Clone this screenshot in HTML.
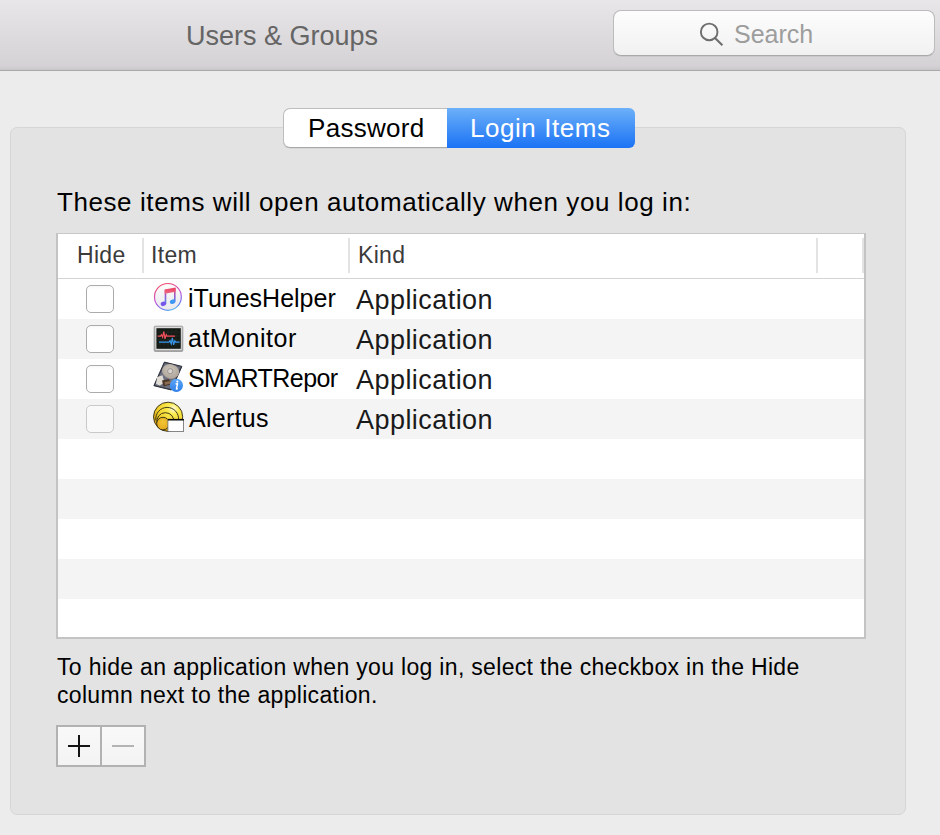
<!DOCTYPE html>
<html><head><meta charset="utf-8">
<style>
html,body{margin:0;padding:0;}
body{width:940px;height:835px;overflow:hidden;background:#ececec;position:relative;font-family:"Liberation Sans",sans-serif;}
.a{position:absolute;}
.t{position:absolute;white-space:pre;line-height:1;}
#titlebar{left:0;top:0;width:940px;height:70px;background:linear-gradient(#e8e6e8 0,#d4d2d5 66px,#c9c7ca 70px);border-bottom:1px solid #a9a9a9;}
#search{left:613px;top:10px;width:320px;height:44px;box-shadow:0 0.5px 0.6px rgba(0,0,0,0.12);border:1px solid #bcbcbc;border-bottom-color:#a9a9a9;border-radius:8px;background:linear-gradient(#fdfdfd,#f1f1f1);}
#group{left:10px;top:127px;width:894px;height:686px;border:1px solid #d6d6d6;border-radius:7px;background:#e3e3e3;}
#tabpw{left:283px;top:108px;width:163px;height:38px;background:#fff;border:1px solid #bdbdbd;border-right:none;border-bottom-color:#a8a8a8;border-radius:7px 0 0 7px;box-shadow:0 0.6px 0.6px rgba(0,0,0,0.1);}
#tabli{left:447px;top:108px;width:188px;height:40px;background:linear-gradient(#6cb0f9,#1b73f5);border-radius:0 6px 6px 0;}
#table{left:56px;top:233px;width:806px;height:403px;border:2px solid #c3c3c3;border-top:1px solid #c8c8c8;background:#fff;}
.row{position:absolute;left:0;width:806px;height:40px;}
.alt{background:#f4f4f4;}
.sep{position:absolute;top:4px;width:2px;height:35px;background:#e3e3e3;}
.cb{position:absolute;left:28px;top:6px;width:26px;height:26px;border:1px solid #ababab;border-radius:5px;background:linear-gradient(#f8f8f8,#fff 4px);}
#btns{left:56px;top:725px;width:86px;height:38px;border:2px solid #b2b2b2;background:linear-gradient(#f9f9f9,#f3f3f3);}
</style></head><body>
<div id="titlebar" class="a"></div>
<div class="t" style="left:186px;top:23px;font-size:27px;color:#656565;letter-spacing:0;">Users &amp; Groups</div>
<div id="search" class="a"></div>
<svg class="a" style="left:698px;top:21px" width="28" height="28" viewBox="0 0 28 28"><circle cx="11.2" cy="10.9" r="8.3" fill="none" stroke="#6e6e6e" stroke-width="1.9"/><line x1="17" y1="16.9" x2="24.4" y2="24.3" stroke="#6e6e6e" stroke-width="2.1"/></svg>
<div class="t" style="left:734px;top:22px;font-size:25px;color:#9d9d9d;">Search</div>

<div id="group" class="a"></div>
<div id="tabpw" class="a"></div>
<div id="tabli" class="a"></div>
<div class="t" style="left:308px;top:115px;font-size:26px;color:#000;letter-spacing:0.3px;">Password</div>
<div class="t" style="left:470px;top:115px;font-size:26px;color:#fff;letter-spacing:0.55px;">Login Items</div>

<div class="t" style="left:57px;top:189px;font-size:26px;color:#000;letter-spacing:0.58px;">These items will open automatically when you log in:</div>

<div id="table" class="a">
  <div class="sep" style="left:84px"></div>
  <div class="sep" style="left:290px"></div>
  <div class="sep" style="left:758px"></div>
  <div class="sep" style="left:804px"></div>
  <div class="a" style="left:0;top:44px;width:806px;height:1px;background:#d4d4d4"></div>
  <div class="row" style="top:45px"></div>
  <div class="row alt" style="top:85px"></div>
  <div class="row" style="top:125px"></div>
  <div class="row alt" style="top:165px"></div>
  <div class="row" style="top:205px"></div>
  <div class="row alt" style="top:245px"></div>
  <div class="row" style="top:285px"></div>
  <div class="row alt" style="top:325px"></div>
  <div class="row" style="top:365px;height:38px"></div>
</div>
<div class="t" style="left:77px;top:244px;font-size:23px;color:#3b3b3b;letter-spacing:0.3px;">Hide</div>
<div class="t" style="left:151px;top:244px;font-size:23px;color:#3b3b3b;letter-spacing:0.3px;">Item</div>
<div class="t" style="left:358px;top:244px;font-size:23px;color:#3b3b3b;letter-spacing:0.3px;">Kind</div>

<!-- rows -->
<div class="a" style="left:58px;top:279px;width:806px;height:160px;">
  <div class="cb" style="top:6px"></div>
  <div class="cb" style="top:46px"></div>
  <div class="cb" style="top:86px"></div>
  <div class="cb" style="top:126px;border-color:#c9c9c9;background:#f9f9f9"></div>
</div>
<div class="t" style="left:188px;top:286px;font-size:25px;color:#000;">iTunesHelper</div>
<div class="t" style="left:188px;top:326px;font-size:25px;color:#000;letter-spacing:0.5px;">atMonitor</div>
<div class="t" style="left:188px;top:366px;font-size:25px;color:#000;letter-spacing:-0.55px;">SMARTRepor</div>
<div class="t" style="left:189px;top:406px;font-size:25px;color:#000;letter-spacing:0.28px;">Alertus</div>
<div class="t" style="left:356px;top:287px;font-size:27px;color:#1a1a1a;letter-spacing:0.45px;">Application</div>
<div class="t" style="left:356px;top:327px;font-size:27px;color:#1a1a1a;letter-spacing:0.45px;">Application</div>
<div class="t" style="left:356px;top:367px;font-size:27px;color:#1a1a1a;letter-spacing:0.45px;">Application</div>
<div class="t" style="left:356px;top:407px;font-size:27px;color:#1a1a1a;letter-spacing:0.45px;">Application</div>

<div class="t" style="left:57px;top:653px;font-size:23px;color:#000;letter-spacing:0.32px;line-height:28px;">To hide an application when you log in, select the checkbox in the Hide
column next to the application.</div>

<div id="btns" class="a"></div>

<!-- iTunes icon -->
<svg class="a" style="left:148px;top:278px" width="40" height="38" viewBox="0 0 40 38">
 <defs>
  <linearGradient id="itr" x1="0.3" y1="0" x2="0.7" y2="1"><stop offset="0" stop-color="#f44a66"/><stop offset="0.5" stop-color="#c558d8"/><stop offset="0.85" stop-color="#6a78f2"/><stop offset="1" stop-color="#4cc4f0"/></linearGradient>
  <linearGradient id="itf" x1="0" y1="0" x2="0" y2="1"><stop offset="0" stop-color="#fcfcfc"/><stop offset="1" stop-color="#e9e9ed"/></linearGradient>
  <linearGradient id="itn" x1="0" y1="0" x2="0" y2="1"><stop offset="0" stop-color="#e8466a"/><stop offset="0.5" stop-color="#9a5ad0"/><stop offset="1" stop-color="#4a8cf2"/></linearGradient>
  <linearGradient id="itb" x1="0" y1="0" x2="0" y2="1"><stop offset="0" stop-color="#ea3d5e"/><stop offset="1" stop-color="#ef6a86"/></linearGradient>
 </defs>
 <circle cx="19.9" cy="18.9" r="13.4" fill="url(#itf)" stroke="url(#itr)" stroke-width="1.2"/>
 <path d="M17.5 11.8 L17.5 25.8 M26.8 10.2 L26.8 23.6" fill="none" stroke="url(#itn)" stroke-width="1.6"/>
 <path d="M16.7 11.6 L27.6 9.6 L27.6 13.8 L16.7 15.8 Z" fill="url(#itb)"/>
 <ellipse cx="15.4" cy="25.8" rx="2.8" ry="2.2" transform="rotate(-20 15.4 25.8)" fill="#7656ea"/>
 <ellipse cx="24.6" cy="23.7" rx="2.8" ry="2.2" transform="rotate(-20 24.6 23.7)" fill="#3e98f4"/>
</svg>
<!-- atMonitor icon -->
<svg class="a" style="left:152px;top:324px" width="32" height="30" viewBox="0 0 32 30">
 <defs><linearGradient id="amf" x1="0" y1="0" x2="0" y2="1"><stop offset="0" stop-color="#cfcfcf"/><stop offset="1" stop-color="#a9a9a9"/></linearGradient></defs>
 <rect x="2.2" y="2.2" width="28.6" height="25.2" rx="1" fill="url(#amf)" stroke="#8e8e8e" stroke-width="0.8"/>
 <rect x="3.6" y="3.4" width="25.8" height="22.4" fill="#e6e6e6"/>
 <rect x="4.4" y="4.2" width="24.4" height="20.6" fill="#151a16"/>
 <g stroke="#2b3a2b" stroke-width="0.4">
  <path d="M4.4 8h24.4M4.4 12h24.4M4.4 16h24.4M4.4 20h24.4M8 4.2v20.6M12 4.2v20.6M16 4.2v20.6M20 4.2v20.6M24 4.2v20.6"/>
 </g>
 <path d="M5.6 12.2 H8.5 L9.4 10.8 L10.6 13.2 L11.8 7.6 L13 14.8 L14.2 10.6 L15 12.2 H23" fill="none" stroke="#f24f5c" stroke-width="1.2"/>
 <path d="M7 18.2 H17 L18 16.6 L19.2 19.8 L20.4 13.8 L21.6 20.8 L22.8 16.8 L23.8 18.2 H27.6" fill="none" stroke="#3898f0" stroke-width="1.2"/>
</svg>
<!-- SMART drive icon -->
<svg class="a" style="left:148px;top:358px" width="40" height="38" viewBox="0 0 40 38">
 <defs>
  <radialGradient id="plt" cx="0.45" cy="0.4" r="0.6"><stop offset="0" stop-color="#cfc7bd"/><stop offset="1" stop-color="#ada398"/></radialGradient>
  <linearGradient id="bdg" x1="0" y1="0" x2="0" y2="1"><stop offset="0" stop-color="#5aa6f7"/><stop offset="1" stop-color="#2f7fe8"/></linearGradient>
 </defs>
 <path d="M16.4 4.1 L33.9 8.4 L23.4 32 L5.9 27.7 Z" fill="#4b4e5c" stroke="#2a2c36" stroke-width="1" stroke-linejoin="round"/>
 <path d="M17 5.3 L32.4 9.1 L22.6 30.8 L7.2 27 Z" fill="#6c7080"/>
 <ellipse cx="22.6" cy="13.4" rx="8.6" ry="7.2" transform="rotate(14 22.6 13.4)" fill="url(#plt)"/>
 <circle cx="22.2" cy="13.2" r="2.6" fill="#d9d3cc" stroke="#8c8484" stroke-width="0.8"/>
 <path d="M9.2 19 L14.5 17.2 L16.4 24.5 L11.8 27.6 L8 26 Z" fill="#e0dbd3"/>
 <path d="M14 22.5 L21 21 L23 26.5 L15.5 28.6 Z" fill="#4a3628"/>
 <path d="M16.5 24 L22.5 23 L23 25.5 L17 27 Z" fill="#8a6a50"/>
 <circle cx="28.4" cy="27.4" r="6.6" fill="url(#bdg)"/>
 <circle cx="29.3" cy="23.6" r="1.05" fill="#fff"/>
 <path d="M27.6 26 L29.6 25.6 L28.4 31 L29.8 30.7" fill="none" stroke="#fff" stroke-width="1.4" stroke-linejoin="round"/>
</svg>
<!-- Alertus icon -->
<svg class="a" style="left:150px;top:400px" width="36" height="34" viewBox="0 0 36 34">
 <defs>
  <radialGradient id="alg" cx="0.68" cy="0.22" r="0.75"><stop offset="0" stop-color="#fffbe0"/><stop offset="0.25" stop-color="#fbeb50"/><stop offset="0.7" stop-color="#f1cf2a"/><stop offset="1" stop-color="#d9a515"/></radialGradient>
  <radialGradient id="ald" cx="0.5" cy="0.4" r="0.6"><stop offset="0" stop-color="#f4c534"/><stop offset="1" stop-color="#e2a91c"/></radialGradient>
 </defs>
 <circle cx="18.1" cy="16.8" r="14.6" fill="url(#alg)" stroke="#2b2812" stroke-width="0.9"/>
 <path d="M5.9 20.4 A11.4 11.4 0 1 1 28.5 20.2" fill="none" stroke="#2b2812" stroke-width="0.9"/>
 <path d="M7.1 23.1 A8.5 8.5 0 1 1 23.7 22.9" fill="none" stroke="#2b2812" stroke-width="0.9"/>
 <circle cx="13" cy="23.6" r="6.3" fill="url(#ald)" stroke="#2b2812" stroke-width="0.9"/>
 <rect x="17.9" y="19.4" width="15.6" height="12.2" fill="#fff" stroke="#6a6a6a" stroke-width="0.8"/>
 <rect x="17.9" y="18.9" width="15.9" height="1.6" fill="#060606"/>
</svg>
<!-- +/- -->
<div class="a" style="left:100px;top:727px;width:2px;height:38px;background:#b2b2b2"></div>
<div class="a" style="left:68px;top:745px;width:22px;height:2px;background:#141414"></div>
<div class="a" style="left:78px;top:735px;width:2px;height:22px;background:#141414"></div>
<div class="a" style="left:112px;top:745px;width:22px;height:2px;background:#b4b4b4"></div>
</body></html>
